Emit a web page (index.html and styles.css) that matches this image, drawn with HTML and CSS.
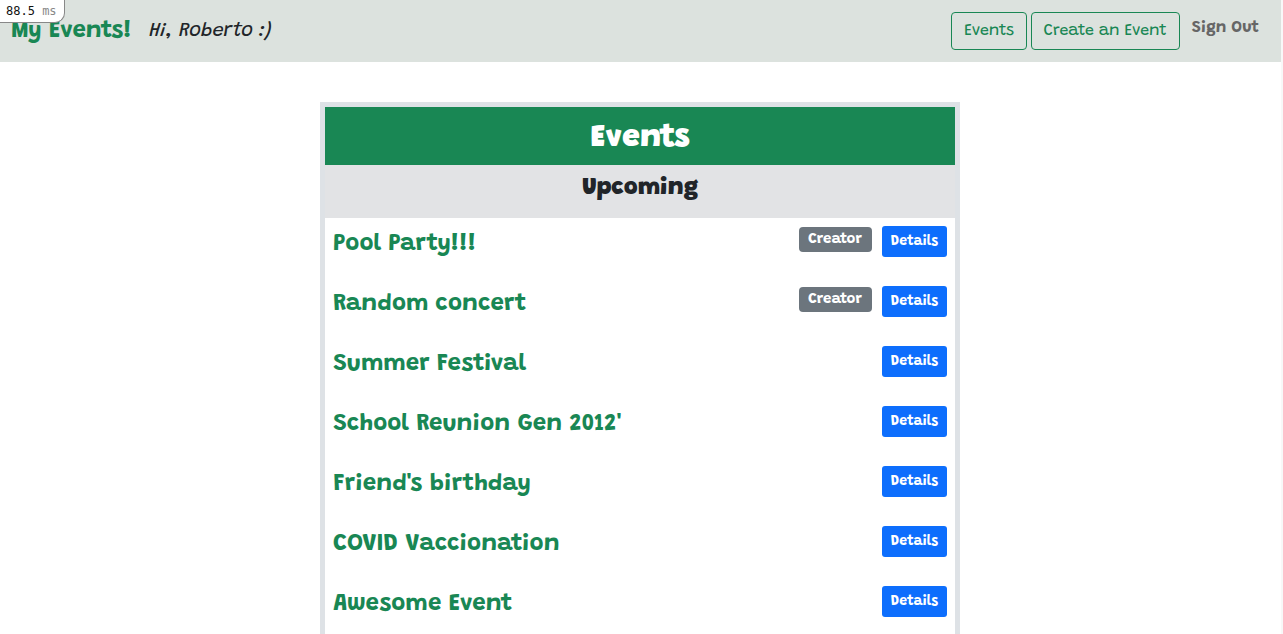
FILE: index.html
```html
<!DOCTYPE html>
<html lang="en">
<head>
<meta charset="utf-8">
<title>My Events!</title>
<link rel="stylesheet" href="styles.css">
</head>
<body>
<header class="navbar">
  <a class="brand" href="#">My Events!</a>
  <em class="greeting">Hi, Roberto :)</em>
  <nav class="nav">
    <a class="btn btn-outline" href="#">Events</a>
    <a class="btn btn-outline" href="#">Create an Event</a>
    <a class="sign-out" href="#">Sign Out</a>
  </nav>
</header>
<div class="profiler">88.5 <span class="unit">ms</span></div>
<main class="events">
  <h1 class="events-title">Events</h1>
  <h2 class="events-group">Upcoming</h2>
  <ul class="event-list">
    <li class="event"><h3 class="event-name">Pool Party!!!</h3><span class="badge">Creator</span><a class="btn btn-details" href="#">Details</a></li>
    <li class="event"><h3 class="event-name">Random concert</h3><span class="badge">Creator</span><a class="btn btn-details" href="#">Details</a></li>
    <li class="event"><h3 class="event-name">Summer Festival</h3><a class="btn btn-details" href="#">Details</a></li>
    <li class="event"><h3 class="event-name">School Reunion Gen 2012'</h3><a class="btn btn-details" href="#">Details</a></li>
    <li class="event"><h3 class="event-name">Friend's birthday</h3><a class="btn btn-details" href="#">Details</a></li>
    <li class="event"><h3 class="event-name">COVID Vaccionation</h3><a class="btn btn-details" href="#">Details</a></li>
    <li class="event"><h3 class="event-name">Awesome Event</h3><a class="btn btn-details" href="#">Details</a></li>
  </ul>
</main>
</body>
</html>
```
FILE: styles.css
```css
* {
  box-sizing: border-box;
}

body {
  margin: 0;
  min-height: 100vh;
  border-right: 2px solid #f8f8f8;
  background: #fff;
  color: #212529;
  font-family: Grandstander, Lato, sans-serif;
  font-size: 16px;
  line-height: 24px;
}

h1,
h2,
h3,
ul {
  margin: 0;
  padding: 0;
}

a {
  text-decoration: none;
}

.navbar {
  display: flex;
  align-items: flex-start;
  padding: 12px 22px 12px 11px;
  background: #dce2de;
}

.brand {
  margin-right: 17px;
  color: #198754;
  font-size: 24px;
  font-weight: 700;
  line-height: 38px;
}

.greeting {
  font-size: 20px;
  line-height: 38px;
}

.nav {
  display: flex;
  align-items: flex-start;
  gap: 4px;
  margin-left: auto;
}

.btn {
  border: 1px solid transparent;
  border-radius: 4px;
  text-align: center;
}

.btn-outline {
  padding: 6px 12px;
  border-color: #198754;
  color: #198754;
}

.sign-out {
  margin-left: 8px;
  padding: 4px 0;
  color: #666;
  font-weight: 700;
}

.profiler {
  position: absolute;
  top: 0;
  left: 0;
  padding: 2px 7px 2px 6px;
  border: solid #888;
  border-width: 0 1px 1px 0;
  border-radius: 0 0 10px 0;
  background: #fff;
  color: #111;
  font-family: "DejaVu Sans Mono", monospace;
  font-size: 12px;
  line-height: 18px;
}

.unit {
  color: #888;
}

.events {
  max-width: 640px;
  margin: 40px 25% 0;
  border: 5px solid #dee2e6;
  border-bottom: 0;
}

.events-title {
  padding: 12px 0 6px;
  background: #198754;
  color: #fff;
  font-size: 32px;
  font-weight: 900;
  line-height: 40px;
  text-align: center;
}

.events-group {
  padding: 8px 0 15px;
  background: #e2e3e5;
  font-size: 24px;
  font-weight: 900;
  line-height: 30px;
  text-align: center;
}

.event-list {
  list-style: none;
}

.event {
  display: flex;
  align-items: flex-start;
  padding: 8px 8px 15px;
}

.event-name {
  margin-right: auto;
  color: #198754;
  font-size: 24px;
  font-weight: 700;
  line-height: 37px;
}

.badge {
  margin: 1px 10px 0 0;
  padding: 4px 10px 3px 9px;
  border-radius: 4px;
  background: #6c757d;
  color: #fff;
  font-size: 15px;
  font-weight: 700;
  line-height: 18px;
}

.btn-details {
  padding: 5px 8px 3px;
  border-radius: 3px;
  background: #0d6efd;
  color: #fff;
  font-size: 14px;
  font-weight: 700;
  line-height: 21px;
}
```
